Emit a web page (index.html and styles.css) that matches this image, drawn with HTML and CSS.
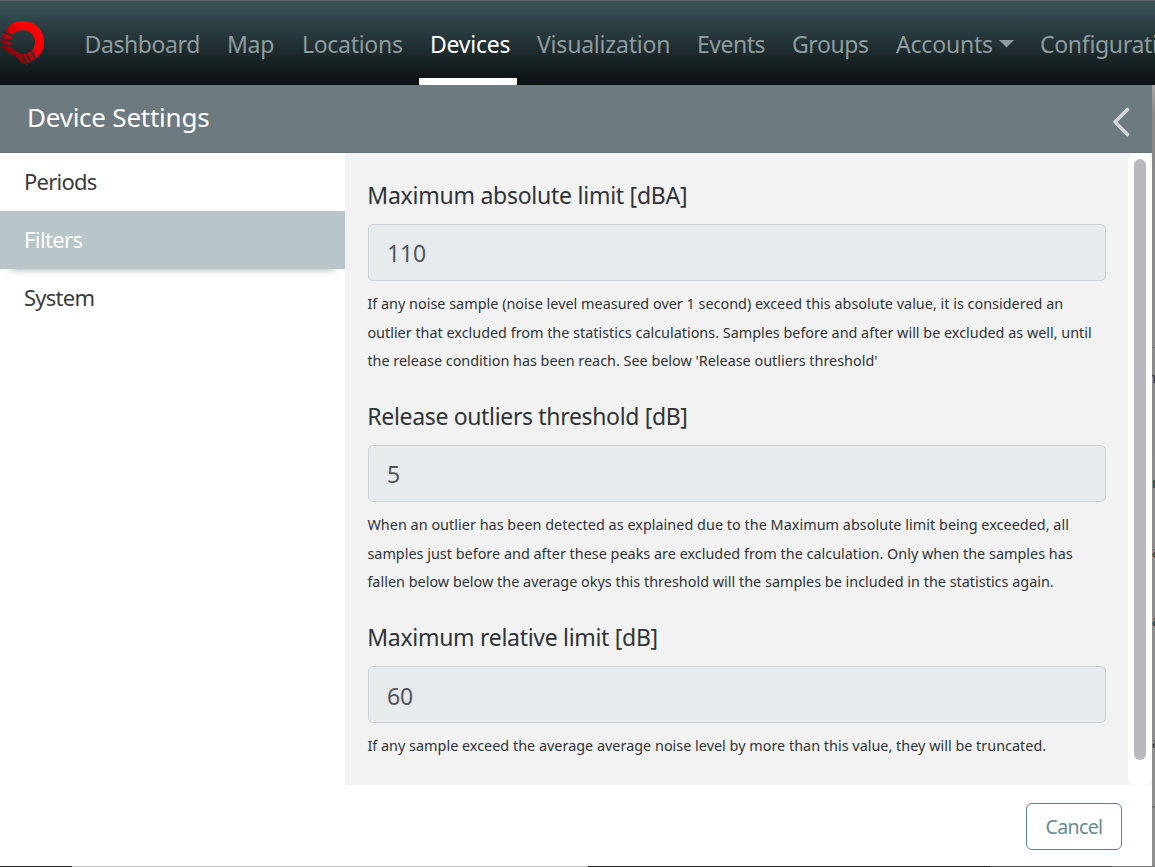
FILE: index.html
```
<!DOCTYPE html>
<html lang="en">
<head>
<meta charset="utf-8">
<title>Device Settings</title>
<link rel="stylesheet" href="styles.css">
</head>
<body>
<div class="app">
  <header class="navbar">
    <svg class="logo" viewBox="0 0 46 48" width="46" height="48" aria-hidden="true">
      <defs>
        <linearGradient id="ring" x1="0.1" y1="0.8" x2="0.75" y2="0.2">
          <stop offset="0" stop-color="#6d0505"/>
          <stop offset="0.45" stop-color="#b90406"/>
          <stop offset="0.8" stop-color="#fa0204"/>
        </linearGradient>
      </defs>
      <path fill="url(#ring)" fill-rule="evenodd" d="M5 14C9 6 15.500 3 23 3C35 3 44 12 44 24C44 31 41 37 36 40.500L29 45L22 46C20 42 18 40 14 37.500C9 35 5 32 1 29L1 22L3 15ZM23 12C16 12 11 17 11 24C11 28 12.500 31 15 33C18 35 20 36 23 36C30 36 35 31 35 24C35 17 30 12 23 12Z"/>
      <path class="logo-cut" d="M3 13.800L13 18M1 20L11.500 23.500M0 25.500L12 28.500M22.500 37L27 47M27 35.500L31.500 45.500M31.500 33L36 42.500"/>
    </svg>
    <nav class="menu">
      <a class="link dashboard">Dashboard</a>
      <a class="link map">Map</a>
      <a class="link locations">Locations</a>
      <a class="link devices active">Devices</a>
      <a class="link visualization">Visualization</a>
      <a class="link events">Events</a>
      <a class="link groups">Groups</a>
      <a class="link accounts">Accounts<svg class="caret" viewBox="0 0 15 8" width="15" height="8"><path d="M0 0H15L7.500 7.500Z" fill="#8e9c9f"/></svg></a>
      <a class="link configuration">Configuration</a>
    </nav>
  </header>
  <div class="stage">
    <main class="panel">
      <div class="panel-header">
        <h1 class="title">Device Settings</h1>
        <svg class="back" viewBox="0 0 18 30" width="18" height="30"><path d="M15.500 2.500L3 15L15.500 27.500" fill="none" stroke="#d3d7d9" stroke-width="3.600" stroke-linecap="round" stroke-linejoin="round"/></svg>
      </div>
      <div class="content">
        <aside class="tabs">
          <div class="tab periods">Periods</div>
          <div class="tab filters selected">Filters</div>
          <div class="tab system">System</div>
        </aside>
        <section class="form">
          <div class="field">
            <label class="label first">Maximum absolute limit [dBA]</label>
            <div class="input">110</div>
            <p class="help">If any noise sample (noise level measured over 1 second) exceed this absolute value, it is considered an<br><span class="tight">outlier that excluded from the statistics calculations. Samples before and after will be excluded as well, until</span><br><span class="tight">the release condition has been reach. See below 'Release outliers threshold'</span></p>
          </div>
          <div class="field">
            <label class="label second">Release outliers threshold [dB]</label>
            <div class="input">5</div>
            <p class="help"><span class="loose">When an outlier has been detected as explained due to the Maximum absolute limit being exceeded, all</span><br>samples just before and after these peaks are excluded from the calculation. Only when the samples has<br>fallen below below the average okys this threshold will the samples be included in the statistics again.</p>
          </div>
          <div class="field">
            <label class="label third">Maximum relative limit [dB]</label>
            <div class="input low">60</div>
            <p class="help">If any sample exceed the average average noise level by more than this value, they will be truncated.</p>
          </div>
        </section>
        <div class="track"><div class="thumb"></div></div>
      </div>
      <footer class="actions"><button class="cancel" type="button">Cancel</button></footer>
    </main>
    <div class="backdrop">
      <div class="rule upper"></div>
      <span class="peek p1">n</span>
      <span class="peek p2">r</span>
      <span class="peek p3">a</span>
      <span class="peek p4">a</span>
      <span class="peek p5">a</span>
      <div class="rule lower"></div>
    </div>
  </div>
  <div class="edge"></div>
</div>
</body>
</html>
```
FILE: styles.css
```
* { box-sizing: border-box; }
body {
  margin: 0;
  overflow: hidden;
  font-family: "Noto Sans", "Open Sans", sans-serif;
  color: #2f3338;
  background: #fff;
}
.app {
  width: 1155px;
  height: 867px;
  display: flex;
  flex-direction: column;
  overflow: hidden;
}
.navbar {
  flex: none;
  height: 85px;
  display: flex;
  align-items: stretch;
  border-top: 1px solid #666263;
  background: linear-gradient(#3a5459, #0b0f11);
  overflow: hidden;
}
.logo { flex: none; margin: 17px 27px 0 0; }
.logo-cut { fill: none; stroke: #1f3035; stroke-width: 1.7; }
.menu { display: flex; flex: none; }
.link {
  flex: none;
  padding: 0 0 0 11px;
  font-size: 23px;
  line-height: 87px;
  height: 84px;
  white-space: nowrap;
  color: #8e9c9f;
}
.dashboard { width: 143px; padding-left: 11.5px; letter-spacing: -0.4px; }
.map { width: 75px; letter-spacing: -0.3px; }
.locations { width: 128px; letter-spacing: -0.3px; }
.devices { width: 98px; letter-spacing: -0.25px; }
.visualization { width: 159px; padding-left: 20px; letter-spacing: -0.2px; }
.events { width: 96px; padding-left: 21px; letter-spacing: -0.5px; }
.groups { width: 104px; padding-left: 20px; letter-spacing: -0.4px; }
.accounts { width: 145px; padding-left: 20px; letter-spacing: -0.2px; }
.configuration { padding-left: 19px; letter-spacing: -0.3px; }
.active { color: #fff; border-bottom: 7px solid #fff; }
.caret { margin-left: 6px; vertical-align: 5px; }
.stage { flex: none; height: 781px; display: flex; }
.panel { width: 1152px; display: flex; flex-direction: column; }
.panel-header {
  height: 68px;
  display: flex;
  justify-content: space-between;
  background: #6d7a80;
  border-bottom: 1px solid #62717a;
  padding: 0 22px 0 27px;
}
.title {
  margin: 0;
  font-size: 26px;
  font-weight: 400;
  line-height: 65px;
  letter-spacing: -0.23px;
  color: #fff;
}
.back { margin-top: 22px; }
.content { height: 632px; display: flex; background: #f2f2f2; }
.tabs { width: 345px; background: #fff; }
.tab {
  height: 58px;
  padding-left: 24px;
  font-size: 22px;
  line-height: 56px;
  color: #3b3b3b;
}
.periods { letter-spacing: -0.75px; }
.filters { letter-spacing: -0.6px; }
.system { letter-spacing: -0.75px; }
.selected {
  color: #fff;
  background: #b8c5c9;
  box-shadow: 0 10px 8px -11px rgba(40, 60, 65, 0.6);
}
.form { width: 783px; padding: 24px 22px 0 23px; }
.field { margin-bottom: 23.5px; }
.label {
  display: block;
  height: 47px;
  margin-left: -0.7px;
  font-size: 23px;
  line-height: 36px;
  white-space: nowrap;
}
.first { letter-spacing: -0.25px; }
.second { letter-spacing: -0.34px; }
.third { letter-spacing: -0.3px; }
.input {
  height: 57px;
  border: 1px solid #cbd2da;
  border-radius: 5px;
  background: #e7ebee;
  color: #50565c;
  padding-left: 18px;
  font-size: 23px;
  line-height: 56px;
  letter-spacing: -0.2px;
}
.low { line-height: 58px; }
.help {
  height: 85.5px;
  margin: 8px 0 0 -0.6px;
  padding-top: 1px;
  font-size: 14.4px;
  line-height: 28.5px;
  letter-spacing: 0.01px;
  white-space: nowrap;
}
.tight { letter-spacing: -0.003px; }
.loose { letter-spacing: 0.03px; }
.track {
  width: 24px;
  height: 632px;
  border-radius: 7px;
  background: #fff;
  padding: 6px;
}
.thumb { width: 12px; height: 601px; border-radius: 6px; background: #bab8bf; }
.actions { height: 81px; padding: 18px 30px 0 0; display: flex; justify-content: flex-end; }
.cancel {
  width: 96px;
  height: 47px;
  padding: 0;
  border: 1px solid #5a868a;
  border-radius: 6px;
  background: #fff;
  color: #658b90;
  font-family: inherit;
  font-size: 19.5px;
  letter-spacing: -0.6px;
}
.backdrop {
  position: relative;
  width: 3px;
  overflow: hidden;
  background: linear-gradient(#aaa6a6, #8a8a8a 28px, #8f8f8f 100%);
}
.rule { position: absolute; left: 0; width: 3px; height: 1px; background: #747474; }
.upper { top: 262px; }
.lower { top: 721px; height: 2px; }
.peek { position: absolute; left: 0; font-size: 15px; line-height: 20px; color: #333; }
.p1 { top: 282px; left: -5px; }
.p2 { top: 387px; }
.p3 { top: 456px; }
.p4 { top: 525px; }
.p5 { top: 647px; }
.edge {
  flex: none;
  height: 1px;
  background: linear-gradient(90deg, #202020 72px, #c2c2c2 72px 588px, #202020 588px 990px, #4c4c4c 990px 1112px, #777 1112px);
}
```
